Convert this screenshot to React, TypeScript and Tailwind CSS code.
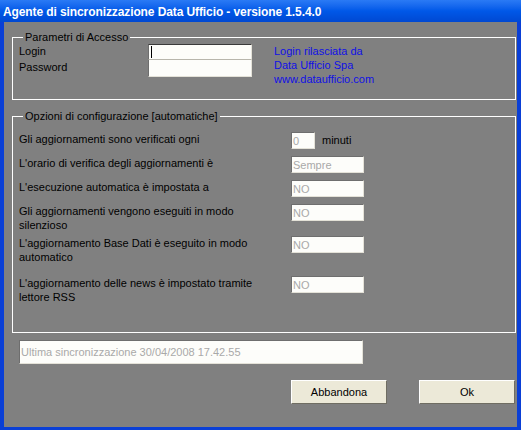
import React from "react";

const font = { fontFamily: '"Liberation Sans", Arial, sans-serif' };

function Field({ value, w }: { value?: string; w: string }) {
  return (
    <div
      className={`${w} h-[17px] bg-[#fdfdfa] border-t border-l border-t-[#6e6e6e] border-l-[#6e6e6e] border-b border-r border-b-[#e4e2d8] border-r-[#e4e2d8] flex items-center pl-[1px] text-[11px] leading-[14px] text-[#a9a9a9] overflow-hidden`}
    >
      {value}
    </div>
  );
}

function Row({ h, label, children }: { h: string; label: React.ReactNode; children: React.ReactNode }) {
  return (
    <div className={`flex items-start ${h}`}>
      <div className="w-[272px] leading-[14px] text-[11px] text-black">{label}</div>
      {children}
    </div>
  );
}

export default function App() {
  return (
    <div className="w-[521px] h-[430px] flex flex-col bg-[#0a3fd6]" style={font}>
      <div className="h-[22px] shrink-0 flex items-center pl-[3px] bg-gradient-to-b from-[#2a7af5] via-[#0058e8] to-[#0048d2]">
        <span className="text-white font-bold text-[12px] tracking-[-0.1px] leading-none pt-[1px]">
          Agente di sincronizzazione Data Ufficio - versione 1.5.4.0
        </span>
      </div>
      <div className="flex-1 mx-[4px] mb-[3px] bg-[#808080] flex flex-col pl-[8px] pr-[1px] pt-[8px] text-[11px] text-black">
        <fieldset className="h-[70px] border border-white m-0 px-[6px] pb-0 pt-0">
          <legend className="ml-[4px] px-[2px] leading-[14px] text-[11px]">Parametri di Accesso</legend>
          <div className="flex">
            <div className="flex flex-col">
              <div className="flex h-[16px]">
                <div className="w-[129px] leading-[14px]">Login</div>
                <div className="w-[104px] h-[16px] bg-[#fdfdfa] border-t border-l border-t-[#3a3a3a] border-l-[#6e6e6e] border-b border-r border-b-[#b8b6ac] border-r-[#e4e2d8] flex items-center pl-[1px]">
                  <span className="block w-[1px] h-[12px] bg-black ml-[1px]" />
                </div>
              </div>
              <div className="flex h-[17px]">
                <div className="w-[129px] leading-[14px]">Password</div>
                <div className="w-[104px] h-[17px] bg-[#fdfdfa] border-l border-l-[#6e6e6e] border-b border-r border-b-[#e4e2d8] border-r-[#e4e2d8]" />
              </div>
            </div>
            <div className="ml-[22px] leading-[14px] text-[#1010e6]">
              <div>Login rilasciata da</div>
              <div>Data Ufficio Spa</div>
              <div>www.dataufficio.com</div>
            </div>
          </div>
        </fieldset>

        <fieldset className="mt-[9px] h-[224px] border border-white m-0 px-[6px] pb-0 pt-[9px]">
          <legend className="ml-[4px] px-[2px] leading-[14px] text-[11px]">Opzioni di configurazione [automatiche]</legend>
          <div className="flex flex-col">
            <Row h="h-[24px]" label="Gli aggiornamenti sono verificati ogni">
              <Field value="0" w="w-[24px]" />
              <span className="ml-[7px] leading-[14px] pt-[1px]">minuti</span>
            </Row>
            <Row h="h-[24px]" label="L'orario di verifica degli aggiornamenti è">
              <Field value="Sempre" w="w-[73px]" />
            </Row>
            <Row h="h-[24px]" label="L'esecuzione automatica è impostata a">
              <Field value="NO" w="w-[73px]" />
            </Row>
            <Row
              h="h-[32px]"
              label={
                <>
                  Gli aggiornamenti vengono eseguiti in modo
                  <br />
                  silenzioso
                </>
              }
            >
              <Field value="NO" w="w-[73px]" />
            </Row>
            <Row
              h="h-[40px]"
              label={
                <>
                  L'aggiornamento Base Dati è eseguito in modo
                  <br />
                  automatico
                </>
              }
            >
              <Field value="NO" w="w-[73px]" />
            </Row>
            <Row
              h="h-[30px]"
              label={
                <>
                  L'aggiornamento delle news è impostato tramite
                  <br />
                  lettore RSS
                </>
              }
            >
              <Field value="NO" w="w-[73px]" />
            </Row>
          </div>
        </fieldset>

        <div className="mt-[7px] ml-[7px] w-[344px] h-[24px] bg-[#fdfdfa] border-t border-l border-t-[#6e6e6e] border-l-[#6e6e6e] border-b border-r border-b-[#e4e2d8] border-r-[#e4e2d8] flex items-center pl-[1px] text-[#a9a9a9] leading-[14px]">
          Ultima sincronizzazione 30/04/2008 17.42.55
        </div>

        <div className="mt-[16px] flex justify-end gap-[32px] pr-[1px]">
          <button className="w-[96px] h-[24px] bg-[#ece9d8] border-t border-l border-t-white border-l-white border-b border-r border-b-[#6f6d62] border-r-[#6f6d62] text-[11px] text-black leading-none">
            Abbandona
          </button>
          <button className="w-[96px] h-[24px] bg-[#ece9d8] border-t border-l border-t-white border-l-white border-b border-r border-b-[#6f6d62] border-r-[#6f6d62] text-[11px] text-black leading-none">
            Ok
          </button>
        </div>
      </div>
    </div>
  );
}
